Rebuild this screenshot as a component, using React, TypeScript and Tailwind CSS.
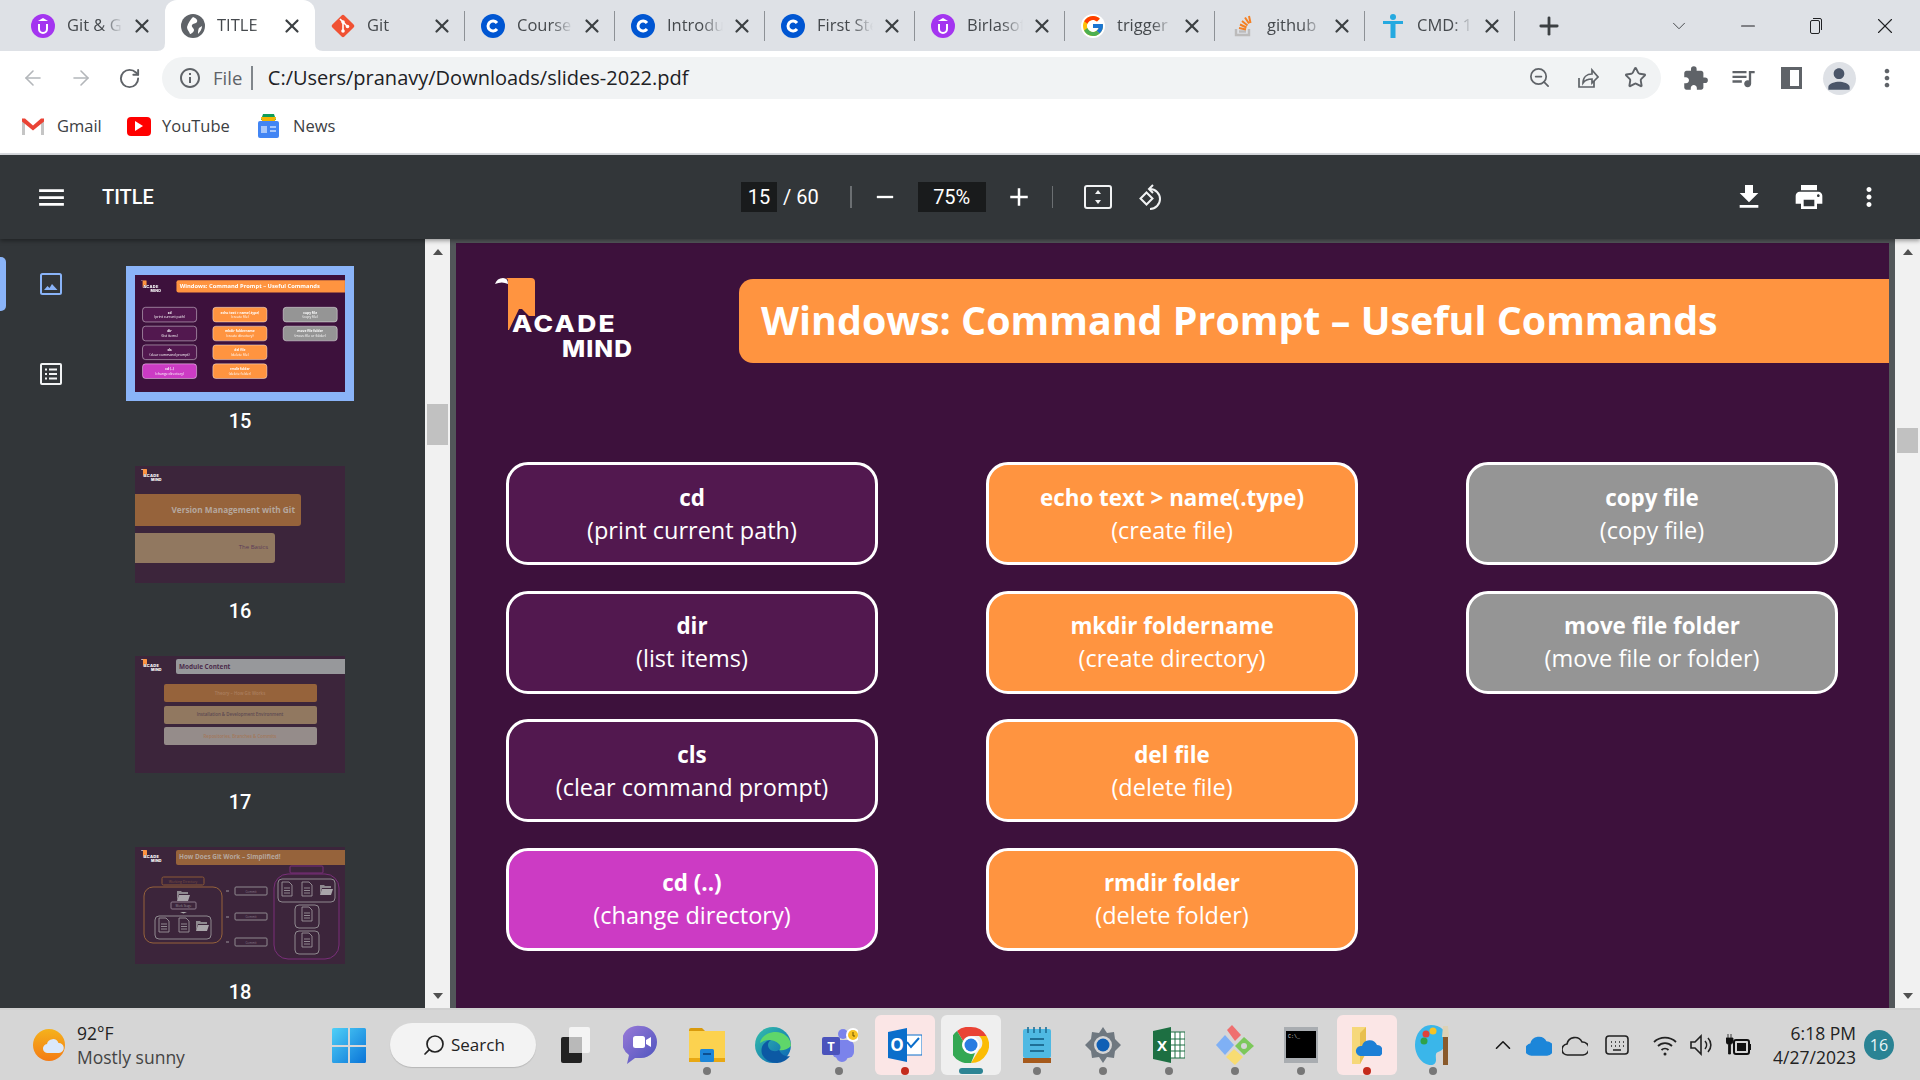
import React from "react";
import { ArrowLeft, ArrowRight, RotateCw, Plus, X, Minus, ChevronDown, ChevronUp, Search, ZoomOut, Star } from "lucide-react";
import { MdExtension, MdQueueMusic, MdMoreVert, MdPerson, MdMenu, MdAdd, MdRemove, MdFileDownload, MdPrint, MdOutlineInfo } from "react-icons/md";
import { FcGoogle } from "react-icons/fc";

const sans = "font-['Open_Sans',sans-serif]";
const roboto = "font-['Roboto',sans-serif]";

const Udemy = () => (
  <svg width="24" height="24" viewBox="0 0 24 24">
    <circle cx="12" cy="12" r="12" fill="#a435f0" />
    <path d="M8 10v5a4 4 0 0 0 8 0v-5" fill="none" stroke="#fff" strokeWidth="2" />
    <path d="M12 4l5 3H7z" fill="#fff" />
  </svg>
);
const Globe = () => (
  <svg width="24" height="24" viewBox="0 0 24 24">
    <circle cx="12" cy="12" r="12" fill="#5f6368" />
    <path d="M12 3c3 1 5 3 4 5s-4 1-5 3 2 3 2 5-3 4-4 4c-1-3-3-4-3-7 1-4 4-8 6-10z" fill="#fff" />
    <path d="M18 14l3-2c0 3-2 6-4 8 0-2 0-4 1-6z" fill="#fff" />
  </svg>
);
const GitTab = () => (
  <svg width="24" height="24" viewBox="0 0 24 24">
    <rect x="3.5" y="3.5" width="17" height="17" rx="2" transform="rotate(45 12 12)" fill="#f05133" />
    <path d="M9 5l6 6M12 8v9M12 8l5 5" stroke="#fff" strokeWidth="1.6" fill="none" />
    <circle cx="12" cy="8" r="1.8" fill="#fff" />
    <circle cx="12" cy="17" r="1.8" fill="#fff" />
    <circle cx="16.5" cy="12.5" r="1.8" fill="#fff" />
  </svg>
);
const Coursera = () => (
  <svg width="24" height="24" viewBox="0 0 24 24">
    <circle cx="12" cy="12" r="12" fill="#0056d2" />
    <path d="M16 9a5 5 0 1 0 0 6" fill="none" stroke="#fff" strokeWidth="3" />
  </svg>
);
const StackIcon = () => (
  <svg width="24" height="24" viewBox="0 0 24 24">
    <path d="M5 15v6h13v-6" fill="none" stroke="#bcbbbb" strokeWidth="2.4" />
    <path d="M8 17.5h7" stroke="#bcbbbb" strokeWidth="2.4" />
    <path d="M8 14l7 1.5M9 10.5l6.5 3M11 7l5.5 4.5M14 3.5l4 6M18 2l1.5 7" stroke="#f48024" strokeWidth="2" fill="none" />
  </svg>
);
const PersonTab = () => (
  <svg width="24" height="24" viewBox="0 0 24 24">
    <circle cx="12" cy="3" r="3" fill="#25a9e0" />
    <rect x="2" y="7" width="20" height="3" fill="#25a9e0" />
    <path d="M9.5 7h5v17h-5z" fill="#25a9e0" />
  </svg>
);

const tabs = [
  { title: "Git & GitHub", icon: <Udemy />, sep: false },
  { title: "TITLE", icon: <Globe />, active: true, sep: false },
  { title: "Git", icon: <GitTab />, sep: true },
  { title: "Course", icon: <Coursera />, sep: true },
  { title: "Introduction", icon: <Coursera />, sep: true },
  { title: "First Steps", icon: <Coursera />, sep: true },
  { title: "Birlasoft", icon: <Udemy />, sep: true },
  { title: "trigger", icon: <FcGoogle size={24} className="rounded-full bg-white" />, sep: true },
  { title: "github", icon: <StackIcon />, sep: true },
  { title: "CMD: 1", icon: <PersonTab />, sep: true },
];

const Tab = ({ title, icon, active, sep }: { title: string; icon: React.ReactNode; active?: boolean; sep?: boolean }) => (
  <div className={`relative flex h-[51px] w-[150px] shrink-0 items-center pl-[16px] ${active ? "rounded-t-[12px] bg-white" : ""}`}>
    {active && (
      <>
        <svg className="absolute bottom-0 -left-2" width="8" height="8"><path d="M8 0V8H0Q8 8 8 0Z" fill="#fff" /></svg>
        <svg className="absolute -right-2 bottom-0" width="8" height="8"><path d="M0 0V8H8Q0 8 0 0Z" fill="#fff" /></svg>
      </>
    )}
    <div className="flex w-[24px] shrink-0 justify-center">{icon}</div>
    <div className={`ml-[12px] w-[56px] shrink-0 overflow-hidden whitespace-nowrap text-[16.5px] text-[#45494d] [mask-image:linear-gradient(to_right,black_62%,transparent)] ${sans}`}>
      {title}
    </div>
    <X size={22} strokeWidth={2.4} className="ml-[8px] shrink-0 text-[#3c4043]" />
    {sep && <div className="absolute top-[11px] right-0 h-[30px] w-[1.5px] bg-[#8d9196]" />}
  </div>
);

const TabStrip = () => (
  <div className="flex h-[51px] items-center bg-[#dee1e6] pl-[15px]">
    {tabs.map((t) => (
      <Tab key={t.title} {...t} />
    ))}
    <Plus size={28} strokeWidth={2.4} className="ml-[20px] text-[#3c4043]" />
    <ChevronDown size={22} strokeWidth={1} className="ml-[105px] text-[#3c4043]" />
    <Minus size={22} strokeWidth={1.2} className="ml-[47px] text-[#202124]" />
    <svg className="ml-[47px]" width="18" height="18" viewBox="0 0 18 18" fill="none" stroke="#202124">
      <rect x="4.5" y="3.5" width="9" height="13" rx="1.5" />
      <path d="M7 1.5h7a1.5 1.5 0 0 1 1.5 1.5v10" />
    </svg>
    <X size={26} strokeWidth={1} className="ml-[48px] text-[#202124]" />
  </div>
);

const GmailIcon = () => (
  <svg width="24" height="18" viewBox="0 0 24 18">
    <path d="M1 18V3l3-1v16z" fill="#c5c5c5" />
    <path d="M20 18V2l3 1v15z" fill="#c5c5c5" />
    <path d="M1 1.5l3 0 8 7 8-7h3v3l-11 9-11-9z" fill="#ea4335" />
  </svg>
);
const NewsIcon = () => (
  <svg width="22" height="24" viewBox="0 0 22 24">
    <path d="M5 0h11l2 6H3z" fill="#0f9d58" />
    <path d="M3 3h15l-1 4H4z" fill="#f4b400" />
    <rect x="0" y="7" width="21" height="17" rx="2" fill="#4285f4" />
    <rect x="3" y="12" width="6" height="7" fill="#a8c7fa" />
    <rect x="12" y="12" width="6" height="2" fill="#a8c7fa" />
    <rect x="12" y="16" width="6" height="2" fill="#a8c7fa" />
  </svg>
);

const AddressRow = () => (
  <div className="flex h-[51px] items-center bg-white pt-[3px] pl-[9px]">
    <div className="flex w-[48px] justify-center"><ArrowLeft size={24} strokeWidth={1.6} className="text-[#b3b6ba]" /></div>
    <div className="flex w-[48px] justify-center"><ArrowRight size={24} strokeWidth={1.6} className="text-[#b3b6ba]" /></div>
    <div className="flex w-[48px] justify-center"><RotateCw size={23} strokeWidth={2} className="text-[#5f6368]" /></div>
    <div className="ml-[9px] flex h-[42px] w-[1499px] items-center rounded-full bg-[#f1f3f4] pl-[16px]">
      <MdOutlineInfo size={24} className="text-[#5f6368]" />
      <span className={`ml-[11px] text-[18.5px] text-[#5f6368] ${sans}`}>File</span>
      <div className="ml-[9px] h-[24px] w-[1.5px] bg-[#80868b]" />
      <span className={`ml-[15px] text-[20px] text-[#202124] ${sans}`}>C:/Users/pranavy/Downloads/slides-2022.pdf</span>
      <div className="ml-auto flex pr-[2px]">
        <div className="flex w-[48px] justify-center"><ZoomOut size={23} strokeWidth={1.8} className="text-[#5f6368]" /></div>
        <div className="flex w-[48px] justify-center">
          <svg width="24" height="24" viewBox="0 0 24 24" fill="none" stroke="#5f6368" strokeWidth="1.7">
            <path d="M4 12v9h15v-6" />
            <path d="M8 17c0-6 4-9 9-9V4l6 7-6 6v-4c-4 0-7 1-9 4z" />
          </svg>
        </div>
        <div className="flex w-[48px] justify-center"><Star size={23} strokeWidth={2} className="text-[#5f6368]" /></div>
      </div>
    </div>
    <div className="ml-[10px] flex w-[48px] justify-center"><MdExtension size={27} className="text-[#5f6368]" /></div>
    <div className="flex w-[48px] justify-center"><MdQueueMusic size={28} className="text-[#5f6368]" /></div>
    <div className="flex w-[48px] justify-center">
      <div className="flex h-[22px] w-[21px] justify-end border-[3px] border-[#5f6368] bg-[#5f6368]"><div className="w-[9px] bg-white" /></div>
    </div>
    <div className="flex w-[48px] justify-center">
      <div className="flex h-[33px] w-[33px] items-end justify-center overflow-hidden rounded-full bg-[#dee1e6]"><MdPerson size={32} className="text-[#4a5568]" /></div>
    </div>
    <div className="flex w-[48px] justify-center"><MdMoreVert size={28} className="text-[#5f6368]" /></div>
  </div>
);

const BookmarkRow = () => (
  <div className={`flex h-[51px] items-center bg-white pb-[3px] pl-[21px] text-[16.5px] text-[#3c4043] ${sans}`}>
    <GmailIcon />
    <span className="ml-[12px] w-[70px]">Gmail</span>
    <div className="flex h-[19px] w-[24px] items-center justify-center rounded-[4px] bg-[#ff0000]">
      <div className="h-0 w-0 border-y-[5px] border-l-[8px] border-y-transparent border-l-white" />
    </div>
    <span className="ml-[11px] w-[96px]">YouTube</span>
    <NewsIcon />
    <span className="ml-[13px]">News</span>
  </div>
);

const LogoMark = ({ width }: { width: number }) => (
  <svg width={width} height={(width * 82) / 140} viewBox="0 0 140 82">
    <path d="M13 3Q13 0 10 0H36Q40 0 40 4V38H34L27 31H24L14 52H13Z" fill="#ff9440" />
    <path d="M0 6Q2 0 8 0Q13 0 13 6Q7 3 0 6Z" fill="#fff" />
    <text x="17" y="54" textLength="105" lengthAdjust="spacingAndGlyphs" letterSpacing="2" fontFamily="Inter, sans-serif" fontWeight="800" fontSize="23" fill="#fff">ACADE</text>
    <text x="67" y="79" textLength="71" lengthAdjust="spacingAndGlyphs" letterSpacing="1" fontFamily="Inter, sans-serif" fontWeight="800" fontSize="23" fill="#fff">MIND</text>
  </svg>
);

const boxes = [
  [
    { a: "cd", b: "(print current path)", c: "purple" },
    { a: "dir", b: "(list items)", c: "purple" },
    { a: "cls", b: "(clear command prompt)", c: "purple" },
    { a: "cd (..)", b: "(change directory)", c: "magenta" },
  ],
  [
    { a: "echo text > name(.type)", b: "(create file)", c: "orange" },
    { a: "mkdir foldername", b: "(create directory)", c: "orange" },
    { a: "del file", b: "(delete file)", c: "orange" },
    { a: "rmdir folder", b: "(delete folder)", c: "orange" },
  ],
  [
    { a: "copy file", b: "(copy file)", c: "gray" },
    { a: "move file folder", b: "(move file or folder)", c: "gray" },
  ],
];

const boxBg: Record<string, string> = {
  purple: "bg-[#52184f]",
  magenta: "bg-[#cc3bc4]",
  orange: "bg-[#ff9440]",
  gray: "bg-[#959595]",
};

const CommandBox = ({ a, b, c }: { a: string; b: string; c: string }) => (
  <div className={`flex h-[103px] w-[372px] flex-col items-center justify-center rounded-[22px] border-[3.5px] border-white leading-[32px] text-white ${boxBg[c]} ${sans}`}>
    <span className="text-[22.4px] font-bold">{a}</span>
    <span className="text-[23.5px]">{b}</span>
  </div>
);

const Slide = () => (
  <div className="h-[798px] w-[1433px] shrink-0 bg-[#3d113c]">
    <div className="flex pt-[35px] pl-[39px]">
      <div className="w-[244px] shrink-0"><LogoMark width={140} /></div>
      <div className={`mt-[1px] flex h-[84px] flex-1 items-center rounded-l-[14px] bg-[#ff9440] pl-[22px] text-[39.4px] font-bold whitespace-nowrap text-white ${sans}`}>
        Windows: Command Prompt – Useful Commands
      </div>
    </div>
    <div className="mt-[99px] flex gap-[108px] pl-[50px]">
      {boxes.map((col, i) => (
        <div key={i} className="flex flex-col gap-[25.5px]">
          {col.map((b) => (
            <CommandBox key={b.a} {...b} />
          ))}
        </div>
      ))}
    </div>
  </div>
);

const DocIcon = ({ x, y }: { x: number; y: number }) => (
  <g transform={`translate(${x} ${y})`} fill="none" stroke="#9a939a" strokeWidth="0.9">
    <path d="M-5 -7H2L5 -4V7H-5Z" />
    <path d="M-3 -1H3M-3 1.5H3M-3 4H3" />
  </g>
);
const FolderIcon = ({ x, y }: { x: number; y: number }) => (
  <g transform={`translate(${x} ${y})`}>
    <path d="M-6 -5H-2L-1 -4H5V-2H-4L-6 5Z" fill="#8f8a90" />
    <path d="M-4 -1H7L5 5H-6Z" fill="#a9a5aa" />
  </g>
);

const GitDiagram = () => (
  <svg width="210" height="117" viewBox="0 0 210 117" fill="none" fontFamily="Open Sans, sans-serif">
    <rect x="27" y="30" width="42" height="8" rx="1.5" stroke="#8c5a36" />
    <text x="48" y="36" textAnchor="middle" fontSize="3.4" fill="#7f5040" stroke="none">Working Directory</text>
    <rect x="9" y="40" width="78" height="56" rx="9" stroke="#96633b" />
    <FolderIcon x={48} y={49} />
    <rect x="36" y="55" width="25" height="7" rx="1" stroke="#8a7a8a" />
    <text x="48.5" y="60" textAnchor="middle" fontSize="3" fill="#9a939a" stroke="none">Work Stage</text>
    <path d="M45 65h7l-3.5 1.5z" fill="#aaa" />
    <rect x="20" y="69" width="56" height="23" rx="4" stroke="#8f8a90" />
    <DocIcon x={29} y={78} />
    <DocIcon x={49} y={78} />
    <FolderIcon x={67} y={79} />
    <path d="M91 44h3M91 70h3M91 95h3" stroke="#9a939a" />
    <rect x="100" y="40" width="32" height="8" rx="1" stroke="#8f8a90" />
    <rect x="100" y="66" width="32" height="7" rx="1" stroke="#8f8a90" />
    <rect x="100" y="91" width="32" height="8" rx="1" stroke="#8f8a90" />
    <text x="116" y="45.5" textAnchor="middle" fontSize="3" fill="#8a7a8a" stroke="none">Commit</text>
    <text x="116" y="71" textAnchor="middle" fontSize="3" fill="#8a7a8a" stroke="none">Commit</text>
    <text x="116" y="96.5" textAnchor="middle" fontSize="3" fill="#8a7a8a" stroke="none">Commit</text>
    <rect x="139" y="27" width="65" height="85" rx="14" stroke="#7a2f7a" />
    <rect x="155" y="19" width="33" height="7" rx="1" stroke="#7a2f7a" />
    <rect x="143" y="32" width="57" height="23" rx="4" stroke="#8f8a90" />
    <DocIcon x={152} y={42} />
    <DocIcon x={172} y={42} />
    <FolderIcon x={191} y={43} />
    <rect x="160" y="58" width="24" height="23" rx="4" stroke="#8f8a90" />
    <DocIcon x={172} y={67} />
    <rect x="160" y="84" width="24" height="23" rx="4" stroke="#8f8a90" />
    <DocIcon x={172} y={93} />
  </svg>
);

const HeaderBar = ({ title, bar, color }: { title: string; bar: string; color: string }) => (
  <div className="flex pt-[3px] pl-[6px]">
    <div className="w-[35px] shrink-0"><LogoMark width={21} /></div>
    <div className={`flex h-[15px] flex-1 items-center rounded-l-[2px] pl-[3px] text-[6.4px] font-bold whitespace-nowrap ${bar} ${color} ${sans}`}>
      {title}
    </div>
  </div>
);

const Thumb = ({ n, selected, children }: { n: number; selected?: boolean; children: React.ReactNode }) => (
  <div className="flex w-[228px] flex-col items-center">
    <div className={`border-[9px] ${selected ? "border-[#8ab4f8]" : "border-transparent"}`}>
      <div className="h-[117px] w-[210px] overflow-hidden">{children}</div>
    </div>
    <div className={`flex h-[39px] items-center text-[20px] font-medium text-white ${roboto}`}>{n}</div>
  </div>
);

const Thumbs = () => (
  <div className="flex w-[228px] shrink-0 flex-col gap-[16.5px] pt-[27px]">
    <Thumb n={15} selected>
      <div className="origin-top-left scale-[0.1465]"><Slide /></div>
    </Thumb>
    <Thumb n={16}>
      <div className="h-full bg-[#3c253b]">
        <div className="pt-[3px] pl-[6px]"><LogoMark width={21} /></div>
        <div className={`mt-[13px] flex h-[32px] w-[166px] items-center justify-end rounded-r-[3px] bg-[#96633b] pr-[6px] text-[8.3px] font-bold text-[#b5a79e] ${sans}`}>Version Management with Git</div>
        <div className={`mt-[7px] flex h-[30px] w-[140px] items-center justify-end rounded-r-[3px] bg-[#917860] pr-[7px] text-[6px] text-[#5b3c58] ${sans}`}>The Basics</div>
      </div>
    </Thumb>
    <Thumb n={17}>
      <div className="h-full bg-[#3c253b]">
        <HeaderBar title="Module Content" bar="bg-[#97989b]" color="text-[#4b2c4b]" />
        <div className={`mt-[10px] flex flex-col items-center gap-[3.5px] text-[4.4px] font-semibold ${sans}`}>
          <div className="flex h-[18px] w-[153px] items-center justify-center rounded-[2px] bg-[#96633b] text-[#ab7f5f]">Theory – How Git Works</div>
          <div className="flex h-[18px] w-[153px] items-center justify-center rounded-[2px] bg-[#917860] text-[#5d4a52]">Installation &amp; Development Environment</div>
          <div className="flex h-[18px] w-[153px] items-center justify-center rounded-[2px] bg-[#958c8a] text-[#a3785a]">Repositories, Branches &amp; Commits</div>
        </div>
      </div>
    </Thumb>
    <Thumb n={18}>
      <div className="relative h-full bg-[#3c253b]">
        <HeaderBar title="How Does Git Work – Simplified!" bar="bg-[#96633b]" color="text-[#b5a79e]" />
        <div className="absolute inset-0"><GitDiagram /></div>
      </div>
    </Thumb>
  </div>
);

const Triangle = ({ up }: { up?: boolean }) => (
  <div className={`h-0 w-0 border-x-[5.5px] border-x-transparent ${up ? "border-b-[6px] border-b-[#505050]" : "border-t-[6px] border-t-[#505050]"}`} />
);

const Scrollbar = ({ thumbTop, thumbH }: { thumbTop: string; thumbH: string }) => (
  <div className="flex h-full w-[25px] shrink-0 flex-col items-center bg-[#f1f1f1]">
    <div className="flex h-[25px] shrink-0 items-center justify-center"><Triangle up /></div>
    <div className={`w-[21px] shrink-0 bg-[#c1c1c1] ${thumbTop} ${thumbH}`} />
    <div className="mt-auto flex h-[25px] shrink-0 items-center justify-center"><Triangle /></div>
  </div>
);

const Rail = () => (
  <div className="relative w-[126px] shrink-0">
    <div className="absolute top-[18px] left-0 h-[54px] w-[6px] rounded-r-[5px] bg-[#8ab4f8]" />
    <div className="flex flex-col items-center gap-[68px] pt-[34px] pr-[24px]">
      <svg width="22" height="22" viewBox="0 0 22 22">
        <rect x="1" y="1" width="20" height="20" rx="1.5" fill="none" stroke="#8ab4f8" strokeWidth="2" />
        <path d="M4 17l3.5-4 2 2 2.5-4 5.5 6z" fill="#8ab4f8" />
      </svg>
      <svg width="22" height="22" viewBox="0 0 22 22" fill="none" stroke="#f1f3f4" strokeWidth="2">
        <rect x="1" y="1" width="20" height="20" rx="1" />
        <path d="M5 6.5h2M9 6.5h8M5 11h2M9 11h8M5 15.5h2M9 15.5h8" />
      </svg>
    </div>
  </div>
);

const PdfToolbar = () => (
  <div className={`relative z-10 flex h-[84px] shrink-0 items-center bg-[#323639] text-white shadow-[0_2px_4px_rgba(0,0,0,0.35)] ${roboto}`}>
    <div className="flex w-[741px] shrink-0 items-center pl-[35px]">
      <MdMenu size={33} className="shrink-0" />
      <span className="ml-[34px] text-[20px] font-medium">TITLE</span>
    </div>
    <div className="flex h-[30px] w-[36px] items-center justify-center bg-[#191b1c] text-[20px]">15</div>
    <span className="ml-[6px] text-[20px]">/ 60</span>
    <div className="ml-[31px] h-[22px] w-[2px] bg-[#6b6f72]" />
    <MdRemove size={28} className="ml-[19px]" />
    <div className="ml-[19px] flex h-[30px] w-[68px] items-center justify-center bg-[#191b1c] text-[20px]">75%</div>
    <MdAdd size={30} className="ml-[18px]" />
    <div className="ml-[18px] h-[22px] w-[1px] bg-[#6b6f72]" />
    <svg className="ml-[31px]" width="28" height="24" viewBox="0 0 28 24" fill="none" stroke="#f1f3f4" strokeWidth="2">
      <rect x="1" y="1" width="26" height="22" rx="2" />
      <path d="M14 5l3 4h-6zM14 19l3-4h-6z" fill="#f1f3f4" stroke="none" />
    </svg>
    <svg className="ml-[26px]" width="28" height="28" viewBox="0 0 28 28" fill="none" stroke="#f1f3f4" strokeWidth="2">
      <path d="M8.5 9.5l6 6-6 6-6-6z" />
      <path d="M12 6a10 10 0 1 1 0 20" />
      <path d="M15 2l-4 4 4 4" />
    </svg>
    <div className="ml-auto flex items-center pr-[36px]">
      <MdFileDownload size={32} />
      <MdPrint size={32} className="ml-[28px]" />
      <MdMoreVert size={30} className="ml-[29px]" />
    </div>
  </div>
);

const WindowsLogo = () => (
  <svg width="34" height="35" viewBox="0 0 34 35">
    <defs>
      <linearGradient id="win" x1="0" y1="0" x2="1" y2="1">
        <stop offset="0" stopColor="#4fd0f7" />
        <stop offset="1" stopColor="#0a74d8" />
      </linearGradient>
    </defs>
    <path d="M0 1.5A1.5 1.5 0 0 1 1.5 0H16V17H0ZM18 0H32.5A1.5 1.5 0 0 1 34 1.5V17H18ZM0 19H16V35H1.5A1.5 1.5 0 0 1 0 33.5ZM18 19H34V33.5A1.5 1.5 0 0 1 32.5 35H18Z" fill="url(#win)" />
  </svg>
);

const Sun = () => (
  <svg width="32" height="32" viewBox="0 0 32 32">
    <defs>
      <linearGradient id="sun" x1="0" y1="0" x2="0" y2="1">
        <stop offset="0" stopColor="#f5b21c" />
        <stop offset="1" stopColor="#f47b14" />
      </linearGradient>
    </defs>
    <circle cx="16" cy="16" r="16" fill="url(#sun)" />
    <path d="M15 24a4.5 4.5 0 0 1-1-9 6 6 0 0 1 11.5-1 5 5 0 0 1 .5 10z" fill="#dbe8fa" />
  </svg>
);

const TaskView = () => (
  <svg width="30" height="36" viewBox="0 0 30 36">
    <rect x="9" y="0" width="21" height="26" rx="2" fill="#f4f4f4" />
    <rect x="1" y="10" width="21" height="26" rx="2" fill="#222" />
    <rect x="9" y="10" width="13" height="16" fill="#b9b9b9" />
  </svg>
);
const Meet = () => (
  <svg width="36" height="40" viewBox="0 0 36 40">
    <defs>
      <linearGradient id="meet" x1="0" y1="0" x2="1" y2="1">
        <stop offset="0" stopColor="#9a7ad8" />
        <stop offset="1" stopColor="#4a53bd" />
      </linearGradient>
    </defs>
    <path d="M18 1a16 16 0 0 1 0 32c-2 0-4 0-6 0l-8 6 2-9A16 16 0 0 1 18 1z" fill="url(#meet)" />
    <rect x="10" y="11" width="12" height="12" rx="2.5" fill="#fff" />
    <path d="M23 15l5-3v10l-5-3z" fill="#fff" />
  </svg>
);
const Explorer = () => (
  <svg width="36" height="34" viewBox="0 0 36 34">
    <path d="M0 2a2 2 0 0 1 2-2h11l3 3h-16z" fill="#d99a0c" />
    <path d="M0 3h36v31H0z" fill="#fcd24f" />
    <path d="M0 30h36v4H0z" fill="#e8a813" />
    <rect x="11" y="21" width="14" height="13" rx="1.5" fill="#1c86d9" />
    <rect x="14" y="25" width="8" height="2" fill="#0c4f90" />
  </svg>
);
const Edge = () => (
  <svg width="36" height="36" viewBox="0 0 36 36">
    <defs>
      <linearGradient id="edge" x1="0" y1="0" x2="1" y2="1">
        <stop offset="0" stopColor="#35c1a8" />
        <stop offset="1" stopColor="#0a62b8" />
      </linearGradient>
    </defs>
    <circle cx="18" cy="18" r="18" fill="url(#edge)" />
    <path d="M36 19c0-9-8-14-15-14C12 5 6 10 5 16c5-4 14-4 19 1 2 2 2 5 0 6 3 1 8 0 12-4z" fill="#5fd66a" />
    <path d="M24 23c-5 3-11 0-11-5 0-2 1-4 3-5-7 1-11 7-9 14 2 5 8 9 15 9 5 0 10-3 13-7-3 1-8 0-11-6z" fill="#0c59a4" />
  </svg>
);
const Teams = () => (
  <svg width="38" height="38" viewBox="0 0 38 38">
    <circle cx="23" cy="8" r="5" fill="#7b83eb" />
    <rect x="12" y="14" width="22" height="18" rx="6" fill="#7b83eb" />
    <path d="M14 14h14v16a6 6 0 0 1-12 0z" fill="#7b83eb" />
    <rect x="2" y="11" width="18" height="18" rx="2" fill="#4b53bc" />
    <text x="11" y="25" textAnchor="middle" fontSize="13" fontWeight="700" fill="#fff" fontFamily="Open Sans, sans-serif">T</text>
    <circle cx="33" cy="9" r="7" fill="#fff" />
    <circle cx="33" cy="9" r="5" fill="#f7c325" />
    <path d="M33 6v4h2" stroke="#6b5300" fill="none" />
  </svg>
);
const Outlook = () => (
  <svg width="34" height="34" viewBox="0 0 34 34">
    <rect x="15" y="7" width="19" height="20" fill="#fff" stroke="#0a6ecb" strokeWidth="1" />
    <path d="M19 14l4 5 8-9" stroke="#0a6ecb" strokeWidth="2" fill="none" />
    <path d="M0 4L19 0v34L0 30z" fill="#0a6ecb" />
    <text x="9" y="23" textAnchor="middle" fontSize="17" fontWeight="700" fill="#fff" fontFamily="Open Sans, sans-serif">O</text>
  </svg>
);
const Chrome = () => (
  <svg width="36" height="36" viewBox="0 0 36 36">
    <path d="M18 0a18 18 0 0 1 15.6 9H18a9 9 0 0 0-8 5L4 4A18 18 0 0 1 18 0z" fill="#ea4335" />
    <path d="M33.6 9A18 18 0 0 1 18 36l8-13a9 9 0 0 0 0-14z" fill="#fbbc05" />
    <path d="M18 36A18 18 0 0 1 4 4l6 10a9 9 0 0 0 12 12z" fill="#34a853" />
    <circle cx="18" cy="18" r="8.5" fill="#fff" />
    <circle cx="18" cy="18" r="6.5" fill="#2a7de1" />
  </svg>
);
const Notepad = () => (
  <svg width="28" height="36" viewBox="0 0 28 36">
    <rect x="0" y="2" width="28" height="29" rx="2" fill="#4fb9e3" />
    <rect x="0" y="31" width="28" height="5" fill="#a65a1c" />
    <path d="M5 0v6M11 0v6M17 0v6M23 0v6" stroke="#1f6f96" strokeWidth="1.6" />
    <path d="M7 12h14M7 18h14M7 24h14" stroke="#1f6f96" strokeWidth="2" />
  </svg>
);
const Gear = () => (
  <svg width="36" height="36" viewBox="0 0 36 36">
    <path d="M18 0l4 6 7-1 1 7 6 6-6 6-1 7-7-1-4 6-4-6-7 1-1-7-6-6 6-6 1-7 7 1z" fill="#6f7880" />
    <circle cx="18" cy="18" r="9" fill="#d5d5d5" />
    <circle cx="18" cy="18" r="6.5" fill="#0f5fb5" />
  </svg>
);
const Excel = () => (
  <svg width="32" height="36" viewBox="0 0 32 36">
    <rect x="14" y="5" width="18" height="26" fill="#fff" stroke="#1d6f42" />
    <path d="M14 12h18M14 18h18M14 24h18M22 5v26M27 5v26" stroke="#1d6f42" />
    <path d="M0 4L18 0v36L0 32z" fill="#1d6f42" />
    <text x="9" y="24" textAnchor="middle" fontSize="15" fontWeight="700" fill="#fff" fontFamily="Open Sans, sans-serif">X</text>
  </svg>
);
const GitDiamond = () => (
  <svg width="38" height="40" viewBox="0 0 38 40">
    <path d="M16 0l9 10-6 6-8-11z" fill="#ef6f6f" />
    <path d="M9 10l9 10-9 10-9-10z" fill="#7fb0f5" />
    <path d="M28 12l10 9-10 9-9-9z" fill="#7cc85a" />
    <circle cx="28" cy="21" r="3" fill="#d5d5d5" />
    <path d="M18 24l9 8-8 8-9-8z" fill="#f8dc72" />
  </svg>
);
const Cmd = () => (
  <svg width="34" height="36" viewBox="0 0 34 36">
    <rect x="0" y="0" width="34" height="36" fill="#a9adb1" />
    <rect x="2" y="4" width="30" height="27" fill="#000" />
    <text x="4" y="11" fontSize="5" fill="#ddd" fontFamily="Liberation Mono, monospace">C:\_</text>
  </svg>
);
const OneDriveFolder = () => (
  <svg width="30" height="38" viewBox="0 0 30 38">
    <path d="M0 1h14v26L8 38H0z" fill="#f6d87a" />
    <path d="M8 38V7l6-6v26z" fill="#e8bf4e" />
    <path d="M8 30a5 5 0 0 1 2-10 8 8 0 0 1 15-1 6 6 0 0 1 3 11z" fill="#1c7fd6" />
  </svg>
);
const Palette = () => (
  <svg width="36" height="40" viewBox="0 0 36 40">
    <path d="M16 0C7 0 0 9 0 20c0 10 7 20 16 20 3 0 5-2 5-5 0-4-1-7 2-8 5-2 9-5 9-13C32 6 25 0 16 0z" fill="#3ab6ea" />
    <circle cx="9" cy="16" r="3.5" fill="#2fa24a" />
    <circle cx="11" cy="9" r="3.5" fill="#e0433a" />
    <circle cx="18" cy="6" r="3.5" fill="#f7c325" />
    <path d="M28 12h5v28h-5z" fill="#8a5a2b" />
    <path d="M27 12l1-11h5l1 11z" fill="#ddd2b6" />
  </svg>
);

type Running = "dot" | "red" | "bar" | "none";

const taskItems: { icon: React.ReactNode; run: Running; bg?: string }[] = [
  { icon: <TaskView />, run: "none" },
  { icon: <Meet />, run: "none" },
  { icon: <Explorer />, run: "dot" },
  { icon: <Edge />, run: "none" },
  { icon: <Teams />, run: "dot" },
  { icon: <Outlook />, run: "red", bg: "bg-[#fbe6e6]" },
  { icon: <Chrome />, run: "bar", bg: "bg-[#efefef]" },
  { icon: <Notepad />, run: "dot" },
  { icon: <Gear />, run: "dot" },
  { icon: <Excel />, run: "dot" },
  { icon: <GitDiamond />, run: "dot" },
  { icon: <Cmd />, run: "dot" },
  { icon: <OneDriveFolder />, run: "red", bg: "bg-[#fbe6e6]" },
  { icon: <Palette />, run: "dot" },
];

const TaskIcon = ({ icon, run, bg }: { icon: React.ReactNode; run: Running; bg?: string }) => (
  <div className={`relative mx-[3px] flex h-[60px] w-[60px] items-center justify-center rounded-[6px] ${bg ?? ""}`}>
    {icon}
    {run === "dot" && <div className="absolute top-[52px] h-[8px] w-[8px] rounded-full bg-[#777]" />}
    {run === "red" && <div className="absolute top-[52px] h-[8px] w-[8px] rounded-full bg-[#c42b1c]" />}
    {run === "bar" && <div className="absolute top-[53px] h-[6px] w-[24px] rounded-full bg-[#2d8494]" />}
  </div>
);

const Cloud = ({ color }: { color: string }) => (
  <svg width="26" height="24" viewBox="0 0 26 24">
    <path d="M6 22a5.5 5.5 0 0 1-1-11A8 8 0 0 1 20 9a6.5 6.5 0 0 1 1 13z" fill={color} stroke={color === "#d5d5d5" ? "#222" : color} strokeWidth="1.6" />
  </svg>
);

const Tray = () => (
  <div className="flex items-center text-[#1a1a1a]">
    <div className="flex w-[36px] justify-center"><ChevronUp size={26} strokeWidth={1.5} /></div>
    <div className="flex w-[36px] justify-center"><Cloud color="#1c86d9" /></div>
    <div className="flex w-[36px] justify-center"><Cloud color="#d5d5d5" /></div>
    <div className="flex w-[48px] justify-center">
      <svg width="24" height="24" viewBox="0 0 24 24" fill="none" stroke="#222" strokeWidth="1.6">
        <rect x="1" y="3" width="22" height="18" rx="3" />
        <path d="M6 9h1M10 9h1M14 9h1M18 9h1M6 13h1M10 13h1M14 13h1M18 13h1M8 17h8" />
      </svg>
    </div>
    <div className="flex w-[48px] justify-center">
      <svg width="26" height="24" viewBox="0 0 26 24" fill="none" stroke="#222" strokeWidth="1.8">
        <path d="M2 9a16 16 0 0 1 22 0M6 13a10 10 0 0 1 14 0M9.5 17a5 5 0 0 1 7 0" />
        <circle cx="13" cy="21" r="1.5" fill="#222" stroke="none" />
      </svg>
    </div>
    <div className="flex w-[26px] justify-center">
      <svg width="26" height="26" viewBox="0 0 26 26" fill="none" stroke="#222" strokeWidth="1.6">
        <path d="M2 10v6h4l6 6V4l-6 6z" />
        <path d="M16 9a6 6 0 0 1 0 8M19 6a10 10 0 0 1 0 14" />
      </svg>
    </div>
    <div className="flex w-[48px] justify-center">
      <svg width="26" height="26" viewBox="0 0 26 26">
        <rect x="8" y="8" width="15" height="14" rx="2" fill="none" stroke="#111" strokeWidth="2" />
        <rect x="11" y="11" width="9" height="8" fill="#111" />
        <rect x="23" y="12" width="2" height="6" fill="#111" />
        <path d="M2 2v4M5 2v4M0 6h7v3a3.5 3.5 0 0 1-2.5 3.5v9.500h-2v-9.500A3.500 3.500 0 0 1 0 9z" stroke="#111" fill="#111" strokeWidth="0.8" />
      </svg>
    </div>
  </div>
);

const Taskbar = () => (
  <div className={`flex h-[72px] shrink-0 items-center border-t-2 border-[#cfcfcf] bg-[#d6d6d6] ${sans}`}>
    <div className="flex w-[332px] shrink-0 items-center pl-[33px]">
      <Sun />
      <div className="ml-[12px] flex flex-col text-[17.5px] leading-[24px]">
        <span className="text-[#222]">92°F</span>
        <span className="text-[#444]">Mostly sunny</span>
      </div>
    </div>
    <WindowsLogo />
    <div className="ml-[24px] flex h-[44px] w-[146px] shrink-0 items-center rounded-full bg-[#f3f3f3] pl-[32px] text-[17px] text-[#222] shadow-[0_1px_1px_rgba(0,0,0,0.15)]">
      <Search size={24} strokeWidth={1.7} className="-scale-x-100" />
      <span className="ml-[5px]">Search</span>
    </div>
    <div className="ml-[6px] flex shrink-0">
      {taskItems.map((t, i) => (
        <TaskIcon key={i} {...t} />
      ))}
    </div>
    <div className="ml-[19px]"><Tray /></div>
    <div className="flex w-[93px] flex-col items-end text-[17.5px] leading-[24px] whitespace-nowrap text-[#222]">
      <span>6:18 PM</span>
      <span>4/27/2023</span>
    </div>
    <div className="ml-[8px] flex h-[30px] w-[30px] items-center justify-center rounded-full bg-[#2a8394] text-[16px] text-[#eaf6f8]">16</div>
  </div>
);

export default function App() {
  return (
    <div className="flex h-[1080px] w-[1920px] flex-col overflow-hidden bg-white">
      <TabStrip />
      <AddressRow />
      <BookmarkRow />
      <div className="h-[2px] shrink-0 bg-[#dadce0]" />
      <PdfToolbar />
      <div className="flex min-h-0 flex-1">
        <div className="flex w-[425px] shrink-0 bg-[#323639]">
          <Rail />
          <Thumbs />
        </div>
        <Scrollbar thumbTop="mt-[140px]" thumbH="h-[41px]" />
        <div className="w-[1445px] shrink-0 overflow-hidden bg-[#525659] pt-[4px] pl-[6px]">
          <Slide />
        </div>
        <Scrollbar thumbTop="mt-[164px]" thumbH="h-[25px]" />
      </div>
      <Taskbar />
    </div>
  );
}
